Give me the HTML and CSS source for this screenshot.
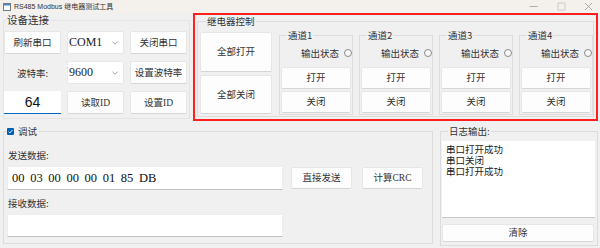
FILE: index.html
```html
<!DOCTYPE html>
<html lang="zh">
<head>
<meta charset="utf-8">
<title>RS485 Modbus 继电器测试工具</title>
<link rel="stylesheet" href="styles.css">
</head>
<body>
<div class="window">
  <header class="titlebar">
    <svg class="app-icon" viewBox="0 0 8 8" width="8" height="8"><rect x="0.5" y="0.5" width="7" height="7" fill="#fff" stroke="#6f7c8a"/><rect x="1" y="1" width="6" height="1.5" fill="#4a86c8"/></svg>
    <span class="title">RS485 Modbus 继电器测试工具</span>
    <div class="controls">
      <svg viewBox="0 0 9 9" width="9" height="9"><line x1="0.5" y1="4.5" x2="8.5" y2="4.5" stroke="#9a9a9a" stroke-width="0.8"/></svg>
      <svg viewBox="0 0 9 9" width="9" height="9"><rect x="1" y="1" width="7" height="7" fill="none" stroke="#c4c4c4" stroke-width="0.8"/></svg>
      <svg viewBox="0 0 9 9" width="9" height="9"><path d="M1 1L8 8M8 1L1 8" stroke="#9a9a9a" stroke-width="0.8"/></svg>
    </div>
  </header>
  <main class="content">
    <section class="top">
      <fieldset class="group device">
        <legend>设备连接</legend>
        <div class="device-grid">
          <button class="btn">刷新串口</button>
          <div class="combo"><span>COM1</span><svg viewBox="0 0 6 4" width="6" height="4"><path d="M0.5 0.8L3 3.2L5.5 0.8" fill="none" stroke="#8c8c8c" stroke-width="0.8"/></svg></div>
          <button class="btn">关闭串口</button>
          <div class="lbl">波特率:</div>
          <div class="combo"><span>9600</span><svg viewBox="0 0 6 4" width="6" height="4"><path d="M0.5 0.8L3 3.2L5.5 0.8" fill="none" stroke="#8c8c8c" stroke-width="0.8"/></svg></div>
          <button class="btn">设置波特率</button>
          <div class="idbox">64</div>
          <button class="btn">读取ID</button>
          <button class="btn">设置ID</button>
        </div>
      </fieldset>
      <div class="highlight">
        <fieldset class="group relay">
          <legend>继电器控制</legend>
          <div class="relay-row">
            <div class="all-col">
              <button class="btn all-on">全部打开</button>
              <button class="btn all-off">全部关闭</button>
            </div>
            <fieldset class="group channel">
              <legend>通道1</legend>
              <div class="status"><span>输出状态</span><span class="radio"></span></div>
              <button class="btn ch-btn first">打开</button>
              <button class="btn ch-btn">关闭</button>
            </fieldset>
            <fieldset class="group channel">
              <legend>通道2</legend>
              <div class="status"><span>输出状态</span><span class="radio"></span></div>
              <button class="btn ch-btn first">打开</button>
              <button class="btn ch-btn">关闭</button>
            </fieldset>
            <fieldset class="group channel">
              <legend>通道3</legend>
              <div class="status"><span>输出状态</span><span class="radio"></span></div>
              <button class="btn ch-btn first">打开</button>
              <button class="btn ch-btn">关闭</button>
            </fieldset>
            <fieldset class="group channel">
              <legend>通道4</legend>
              <div class="status"><span>输出状态</span><span class="radio"></span></div>
              <button class="btn ch-btn first">打开</button>
              <button class="btn ch-btn">关闭</button>
            </fieldset>
          </div>
        </fieldset>
      </div>
    </section>
    <section class="bottom">
      <fieldset class="group debug">
        <legend class="check-legend"><span class="checkbox"><svg viewBox="0 0 7 7" width="7" height="7"><path d="M1.6 3.6L2.9 4.9L5.4 2.1" fill="none" stroke="#fff" stroke-width="0.9"/></svg></span><span>调试</span></legend>
        <div class="field-label first-label">发送数据:</div>
        <div class="send-row">
          <div class="line-input send">00 03 00 00 00 01 85 DB</div>
          <button class="btn send-btn">直接发送</button>
          <button class="btn crc-btn">计算CRC</button>
        </div>
        <div class="field-label">接收数据:</div>
        <div class="line-input recv"></div>
      </fieldset>
      <fieldset class="group log">
        <legend>日志输出:</legend>
        <div class="log-box">串口打开成功<br>串口关闭<br>串口打开成功</div>
        <button class="btn clear">清除</button>
      </fieldset>
    </section>
  </main>
</div>
</body>
</html>
```
FILE: styles.css
```css
* { box-sizing: border-box; }
html, body { margin: 0; padding: 0; }
body {
  width: 600px;
  height: 248px;
  overflow: hidden;
  background: #f0f0f0;
  font-family: "Liberation Serif", "Noto Sans CJK SC", serif;
  color: #333;
}
.window { display: flex; flex-direction: column; height: 248px; }

.titlebar {
  height: 13px;
  flex: none;
  background: #f4f0ec;
  display: flex;
  align-items: center;
  padding-left: 3px;
  font-family: "Liberation Sans", "Noto Sans CJK SC", sans-serif;
  font-size: 7px;
  color: #333;
}
.app-icon { margin-right: 3px; flex: none; }
.title { line-height: 9px; white-space: nowrap; }
.controls { margin-left: auto; margin-right: 7px; display: flex; align-items: center; gap: 18.5px; }
.controls svg { display: block; }

.content { flex: 1; display: flex; flex-direction: column; }

.group {
  margin: 0;
  padding: 0;
  border: 1px solid #dcdcdc;
  min-width: 0;
}
.group > legend {
  padding: 0 1px;
  font-family: "Noto Sans CJK SC", sans-serif;
  font-size: 9.5px;
  line-height: 12px;
  color: #333;
}

.btn {
  margin: 0;
  padding: 0;
  background: #fdfdfd;
  border: 1px solid #e6e6e6;
  border-bottom-color: #d6d6d6;
  border-radius: 2px;
  font-family: "Liberation Serif", "Noto Sans CJK SC", serif;
  font-size: 9.5px;
  color: #333;
  line-height: 12px;
}

/* top */
.top { height: 108px; flex: none; display: flex; align-items: flex-start; }
.device {
  margin: 1px 0 0 3px;
  width: 187px;
  height: 105px;
  padding: 5px 0 0 0;
  border-color: #e4e4e4;
}
.device > legend { margin-left: 2px; font-size: 10.5px; }
.device-grid {
  display: grid;
  grid-template-columns: 57px 57px 57px;
  grid-auto-rows: 23px;
  column-gap: 6px;
  row-gap: 7px;
}
.combo {
  background: #fff;
  border: 1px solid #e8e8e8;
  border-radius: 2px;
  display: flex;
  align-items: center;
  justify-content: space-between;
  padding: 0 5px 0 1px;
  font-size: 12px;
  color: #222;
}
.combo svg { display: block; }
.lbl {
  display: flex;
  align-items: center;
  justify-content: center;
  font-family: "Noto Sans CJK SC", sans-serif;
  font-size: 9.5px;
  color: #333;
}
.idbox {
  background: #fff;
  border-bottom: 1px solid #0067c0;
  display: flex;
  align-items: center;
  justify-content: center;
  font-family: "Liberation Sans", sans-serif;
  font-size: 14px;
  color: #111;
}

.highlight {
  margin-left: 3px;
  width: 405px;
  height: 108px;
  border: 2px solid #ff1f1f;
  padding: 0 2px 2px 2px;
  display: flex;
}
.relay { flex: 1; padding: 2px 0 0 2px; }
.relay > legend { margin-left: 6px; }
.relay-row { display: flex; align-items: flex-start; }
.all-col {
  width: 72px;
  margin-right: 7px;
  padding-top: 3px;
  display: flex;
  flex-direction: column;
  gap: 3px;
}
.all-on { height: 40px; }
.all-off { height: 39px; }

.channel {
  width: 74px;
  height: 86px;
  margin-right: 6px;
  padding: 0 1px;
  display: flex;
  flex-direction: column;
}
.channel:last-child { margin-right: 0; }
.channel > legend { margin-left: 6px; }
.status {
  margin-top: 5px;
  height: 14px;
  display: flex;
  align-items: center;
  justify-content: flex-end;
  gap: 5px;
  font-family: "Noto Sans CJK SC", sans-serif;
  font-size: 9.5px;
  color: #333;
  margin-right: -1px;
}
.radio {
  width: 8px;
  height: 8px;
  border: 1px solid #8a8a8a;
  border-radius: 50%;
  background: #f7f7f7;
}
.ch-btn { height: 22px; margin-top: 2px; }
.ch-btn.first { margin-top: 7px; }

/* bottom */
.bottom { flex: 1; display: flex; align-items: flex-start; padding-top: 4px; }
.debug {
  margin-left: 3px;
  width: 430px;
  padding: 0 0 6px 3px;
}
.check-legend {
  display: flex;
  align-items: center;
  gap: 4px;
  height: 12px;
}
.group > legend.check-legend { padding: 0 2px 0 0; }
.checkbox {
  width: 7px;
  height: 7px;
  background: #005fb8;
  border-radius: 1px;
  display: block;
}
.checkbox svg { display: block; }
.field-label {
  margin-top: 7px;
  height: 12px;
  line-height: 12px;
  font-family: "Noto Sans CJK SC", sans-serif;
  font-size: 9.5px;
  color: #333;
  padding-left: 1px;
}
.first-label { margin-top: 12px; }
.send-row { margin-top: 5px; height: 24px; display: flex; align-items: center; }
.line-input {
  background: #fff;
  border: 1px solid #ededed;
  border-bottom-color: #c2c2c2;
  width: 276px;
}
.send {
  height: 24px;
  padding-left: 4px;
  display: flex;
  align-items: center;
  font-size: 12.5px;
  word-spacing: 2.5px;
  color: #111;
}
.recv { margin-top: 5px; height: 23px; }
.send-btn { margin-left: 8px; width: 61px; height: 22px; }
.crc-btn { margin-left: 10px; width: 61px; height: 22px; }

.log {
  margin-left: 7px;
  width: 158px;
  height: 121px;
  padding: 0 2px 0 1px;
}
.log > legend { margin-left: 6px; }
.log-box {
  margin-top: 4px;
  height: 77px;
  background: #fff;
  border-bottom: 1px solid #c8c8c8;
  padding: 3px 4px;
  font-family: "Noto Sans CJK SC", sans-serif;
  font-size: 9.5px;
  line-height: 11px;
  color: #222;
}
.clear { margin-top: 6px; width: 152px; height: 18px; display: block; }
```
